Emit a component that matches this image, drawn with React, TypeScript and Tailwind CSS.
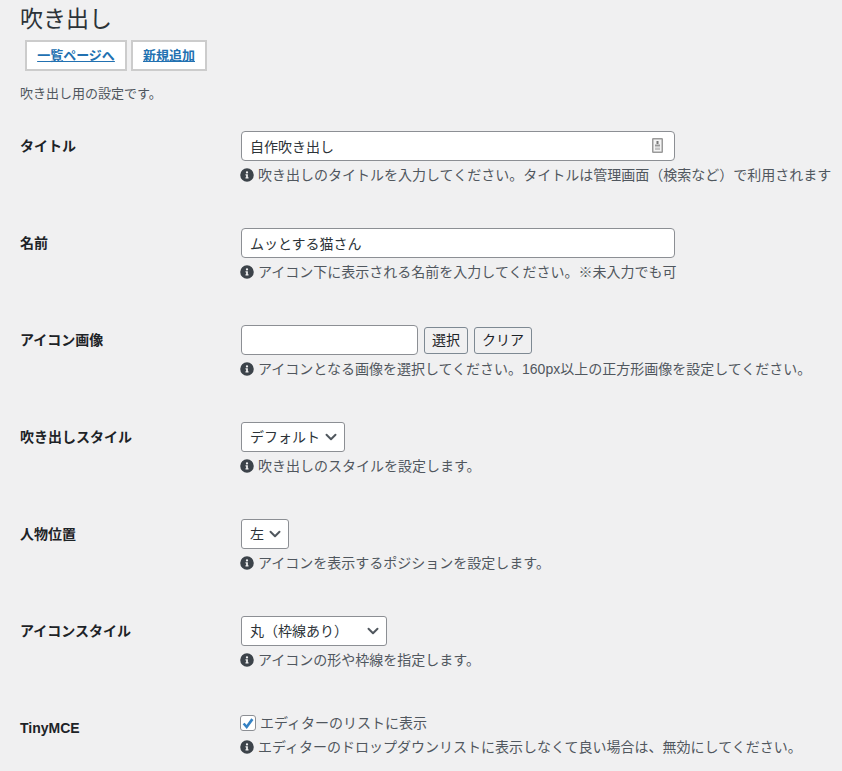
import { ChevronDown } from "lucide-react";

const FONT = '"Liberation Sans", "Noto Sans CJK JP", sans-serif';

function Help({ children }: { children: React.ReactNode }) {
  return (
    <p className="mt-[4px] flex h-[20px] items-center whitespace-nowrap text-[14px] leading-[20px] text-[#50575e]">
      <svg viewBox="0 0 512 512" className="-ml-px mr-[4px] h-[14px] w-[14px] shrink-0" fill="#3c434a">
        <path d="M256 8a248 248 0 1 0 0 496 248 248 0 0 0 0-496zm0 110a42 42 0 1 1 0 84 42 42 0 0 1 0-84zm56 254c0 7-5 12-12 12h-88c-7 0-12-5-12-12v-24c0-7 5-12 12-12h12v-64h-12c-7 0-12-5-12-12v-24c0-7 5-12 12-12h64c7 0 12 5 12 12v100h12c7 0 12 5 12 12z" />
      </svg>
      {children}
    </p>
  );
}

function Row({ label, children }: { label: string; children: React.ReactNode }) {
  return (
    <div className="flex h-[97px] items-start">
      <div className="flex h-[30px] w-[221px] shrink-0 items-center text-[14px] font-bold text-[#1d2327]">{label}</div>
      <div>{children}</div>
    </div>
  );
}

function Input({ value, width, keyIcon }: { value: string; width: string; keyIcon?: boolean }) {
  return (
    <div className={`${width} relative h-[30px]`}>
      <input
        readOnly
        value={value}
        className="h-full w-full rounded-[4px] border border-[#8c8f94] bg-white px-[8px] text-[14px] text-[#2c3338] outline-none"
      />
      {keyIcon && (
        <svg viewBox="0 0 11 15" className="absolute right-[12px] top-[7px] h-[15px] w-[11px]">
          <rect x="0.75" y="0.75" width="9.5" height="13.5" rx="0.5" fill="#f4f4f4" stroke="#9a9a9a" strokeWidth="1.5" />
          <rect x="4.5" y="3" width="2" height="3" fill="#777" />
          <rect x="3" y="6.5" width="5" height="2" fill="#999" />
          <rect x="3" y="9.5" width="5" height="2.5" fill="#c4c4c4" />
        </svg>
      )}
    </div>
  );
}

function Select({ value, width }: { value: string; width: string }) {
  return (
    <div className={`${width} relative h-[30px]`}>
      <select className="h-full w-full appearance-none rounded-[3px] border border-[#8c8f94] bg-white pl-[8px] pr-[24px] text-[14px] text-[#2c3338] outline-none">
        <option>{value}</option>
      </select>
      <ChevronDown size={18} strokeWidth={2.6} className="pointer-events-none absolute right-[5px] top-[6px] text-[#50575e]" />
    </div>
  );
}

function SmallButton({ children }: { children: React.ReactNode }) {
  return (
    <button className="h-[27px] rounded-[3px] border border-[#7e8993] bg-[#f0f0f1] px-[7px] text-[14px] text-[#1d2327]">
      {children}
    </button>
  );
}

function LinkButton({ children, width }: { children: React.ReactNode; width: string }) {
  return (
    <a
      href="#"
      className={`${width} flex h-[31px] items-center justify-center border-2 border-[#cccccc] bg-white text-[13px] font-bold text-[#2271b1] underline`}
    >
      {children}
    </a>
  );
}

export default function App() {
  return (
    <div className="h-[771px] overflow-hidden bg-[#f0f0f1] pl-[20px]" style={{ fontFamily: FONT }}>
      <h1 className="h-[40px] pt-[5px] text-[23px] leading-[29px] text-[#2c3338]">吹き出し</h1>
      <div className="flex gap-[4px] pl-[5px]">
        <LinkButton width="w-[102px]">一覧ページへ</LinkButton>
        <LinkButton width="w-[76px]">新規追加</LinkButton>
      </div>
      <p className="mb-[28px] mt-[14px] text-[13px] leading-[18px] text-[#50575e]">吹き出し用の設定です。</p>

      <Row label="タイトル">
        <Input value="自作吹き出し" width="w-[434px]" keyIcon />
        <Help>吹き出しのタイトルを入力してください。タイトルは管理画面（検索など）で利用されます</Help>
      </Row>
      <Row label="名前">
        <Input value="ムッとする猫さん" width="w-[434px]" />
        <Help>アイコン下に表示される名前を入力してください。※未入力でも可</Help>
      </Row>
      <Row label="アイコン画像">
        <div className="flex items-center gap-[6px]">
          <Input value="" width="w-[177px]" />
          <SmallButton>選択</SmallButton>
          <SmallButton>クリア</SmallButton>
        </div>
        <Help>アイコンとなる画像を選択してください。160px以上の正方形画像を設定してください。</Help>
      </Row>
      <Row label="吹き出しスタイル">
        <Select value="デフォルト" width="w-[104px]" />
        <Help>吹き出しのスタイルを設定します。</Help>
      </Row>
      <Row label="人物位置">
        <Select value="左" width="w-[48px]" />
        <Help>アイコンを表示するポジションを設定します。</Help>
      </Row>
      <Row label="アイコンスタイル">
        <Select value="丸（枠線あり）" width="w-[146px]" />
        <Help>アイコンの形や枠線を指定します。</Help>
      </Row>
      <Row label="TinyMCE">
        <label className="flex h-[20px] items-center text-[14px] text-[#50575e]">
          <span className="-ml-px mr-[4px] flex h-[16px] w-[16px] items-center justify-center rounded-[3px] border border-[#8c8f94] bg-white">
            <svg viewBox="0 0 16 16" className="h-[15px] w-[15px]" fill="none" stroke="#3582c4" strokeWidth="3">
              <path d="M3 8 6.5 12 13 3" />
            </svg>
          </span>
          エディターのリストに表示
        </label>
        <Help>エディターのドロップダウンリストに表示しなくて良い場合は、無効にしてください。</Help>
      </Row>
    </div>
  );
}
